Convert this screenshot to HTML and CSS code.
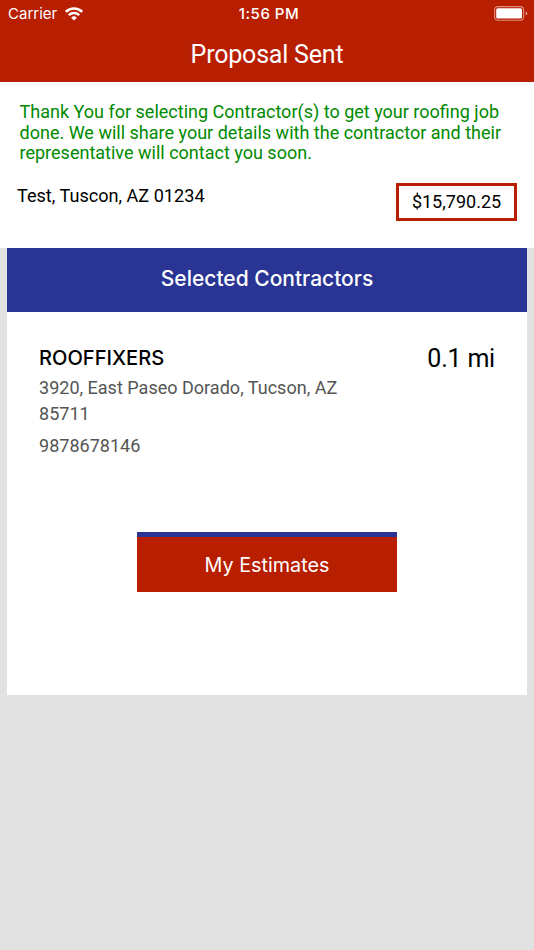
FILE: index.html
```html
<!DOCTYPE html>
<html lang="en">
<head>
    <meta charset="UTF-8">
    <meta name="viewport" content="width=device-width, initial-scale=1.0">
    <title>Proposal Sent</title>
    <link rel="stylesheet" href="styles.css">
</head>
<body>
    <header class="header">
        <div class="status-bar">
            <div class="carrier">
                <span>Carrier</span>
                <svg class="wifi" width="18" height="14" viewBox="0 0 18 14">
                    <path d="M.8 4.9a11.6 11.6 0 0 1 16.4 0" fill="none" stroke="#fff" stroke-width="2.7"/>
                    <path d="M3.8 8.2a7.4 7.4 0 0 1 10.4 0" fill="none" stroke="#fff" stroke-width="2.4"/>
                    <path d="M9 13.6L6.1 10.8a4.1 4.1 0 0 1 5.8 0z" fill="#fff"/>
                </svg>
            </div>
            <span class="time">1:56 PM</span>
            <svg class="battery" width="34" height="15" viewBox="0 0 34 15">
                <rect x="0.6" y="0.6" width="29" height="13.6" rx="3.2" fill="none" stroke="#fff" stroke-opacity="0.5" stroke-width="1.1"/>
                <rect x="2.2" y="2.2" width="25.8" height="10.4" rx="1.6" fill="#fff"/>
                <path d="M31.7 5.2q1.6 .8 1.6 2.2t-1.6 2.2z" fill="#fff" fill-opacity="0.6"/>
            </svg>
        </div>
        <h1>Proposal Sent</h1>
    </header>

    <section class="summary">
        <p class="message">Thank You for selecting Contractor(s) to get your roofing job<br>
            done. We will share your details with the contractor and their<br>
            representative will contact you soon.</p>
        <div class="summary-row">
            <p class="address">Test, Tuscon, AZ 01234</p>
            <div class="price">$15,790.25</div>
        </div>
    </section>

    <main class="card">
        <h2>Selected Contractors</h2>
        <div class="contractor">
            <div class="contractor-info">
                <h3>ROOFFIXERS</h3>
                <p>3920, East Paseo Dorado, Tucson, AZ<br>85711</p>
                <p class="phone">9878678146</p>
            </div>
            <span class="distance">0.1 mi</span>
        </div>
        <button class="estimates-btn">My Estimates</button>
    </main>
</body>
</html>
```

FILE: styles.css
```css
* {
    box-sizing: border-box;
}
body {
    margin: 0;
    min-height: 950px;
    background-color: #e2e2e2;
    font-family: Roboto, sans-serif;
    color: #000;
    white-space: nowrap;
}
h1, h2, h3, p {
    margin: 0;
    font-weight: 400;
}
.header {
    height: 82px;
    background-color: #b81e00;
    color: #fff;
    text-align: center;
}
.status-bar {
    display: grid;
    grid-template-columns: 1fr auto 1fr;
    align-items: center;
    height: 27px;
    padding: 0 6px 0 8px;
    font-family: Inter, sans-serif;
    font-size: 15px;
}
.carrier {
    display: flex;
    align-items: center;
    gap: 8px;
}
.time {
    padding-left: 2px;
    font-weight: 500;
    letter-spacing: 0.5px;
}
.battery {
    justify-self: end;
}
h1 {
    font-size: 25px;
    letter-spacing: -0.2px;
    line-height: 55px;
}
.summary {
    height: 166px;
    padding: 20px 17px 0;
    background-color: #fff;
}
.message {
    padding-left: 2.5px;
    color: #008a00;
    font-size: 18.03px;
    line-height: 20.6px;
}
.summary-row {
    display: flex;
    justify-content: space-between;
    margin-top: 19px;
}
.address {
    margin-top: 2px;
    font-size: 18.1px;
    line-height: 22px;
}
.price {
    width: 121px;
    height: 38px;
    border: 3px solid #b81e00;
    font-size: 18px;
    line-height: 32px;
    text-align: center;
}
.card {
    height: 447.4px;
    margin: 0 7px;
    background-color: #fff;
}
h2 {
    height: 64px;
    background-color: #293494;
    color: #fff;
    font-family: Inter, sans-serif;
    font-size: 21px;
    font-weight: 500;
    line-height: 62px;
    text-align: center;
}
.contractor {
    display: flex;
    justify-content: space-between;
    height: 220px;
    padding: 32px 32px 0;
}
h3 {
    margin-bottom: 2px;
    font-family: Inter, sans-serif;
    font-size: 20.1px;
    font-weight: 500;
    line-height: 29px;
}
.contractor-info p {
    color: #555;
    font-size: 18.05px;
    line-height: 26px;
}
.contractor-info .phone {
    margin-top: 6px;
}
.distance {
    font-size: 25px;
    letter-spacing: -0.2px;
    line-height: 29px;
}
.estimates-btn {
    display: block;
    width: 260px;
    height: 60px;
    margin: 0 auto;
    padding: 0;
    border: none;
    border-top: 5px solid #293494;
    background-color: #b81e00;
    color: #fff;
    font-family: Inter, sans-serif;
    font-size: 19.8px;
    cursor: pointer;
}
```
